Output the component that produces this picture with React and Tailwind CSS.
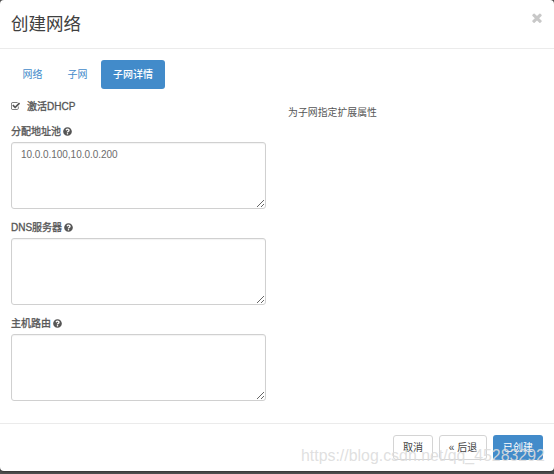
import React, { useState } from "react";
import { FaQuestionCircle } from "react-icons/fa";

const tabs = [
    { name: '网络', className: 'w-[43px]' },
    { name: '子网', className: 'w-[43px]' },
    { name: '子网详情', className: 'w-[64px]' },
]

function CloseIcon() {
    return (
        <svg viewBox="302 302 1188 1252" className="h-[10px] w-[10px]" fill="currentColor">
            <path d="M1490 1322q0 40-28 68l-136 136q-28 28-68 28t-68-28l-294-294-294 294q-28 28-68 28t-68-28l-136-136q-28-28-28-68t28-68l294-294-294-294q-28-28-28-68t28-68l136-136q28-28 68-28t68 28l294 294 294-294q28-28 68-28t68 28l136 136q28 28 28 68t-28 68l-294 294 294 294q28 28 28 68z" />
        </svg>
    )
}

function CheckIcon() {
    return (
        <svg viewBox="64 128 1664 1408" className="h-[8px] w-[9px]" fill="currentColor">
            <path d="M1472 930v318q0 119-84.5 203.5t-203.5 84.5h-832q-119 0-203.5-84.5t-84.5-203.5v-832q0-119 84.5-203.5t203.5-84.5h832q63 0 117 25 15 7 18 23 3 17-9 29l-49 49q-10 10-23 10-3 0-9-2-23-6-45-6h-832q-66 0-113 47t-47 113v832q0 66 47 113t113 47h832q66 0 113-47t47-113v-254q0-13 9-22l64-64q10-10 23-10 6 0 12 3 20 8 20 29zm231-489l-814 814q-24 24-57 24t-57-24l-430-430q-24-24-24-57t24-57l110-110q24-24 57-24t57 24l263 263 647-647q24-24 57-24t57 24l110 110q24 24 24 57t-24 57z" />
        </svg>
    )
}

function Field({ label, value }) {
    return (
        <div className="h-24">
            <label className="flex h-[18px] items-center gap-[2px] text-[#555] [-webkit-text-stroke:0.3px]">
                {label}
                <FaQuestionCircle className="h-[9px] w-[9px]" />
            </label>
            <textarea
                defaultValue={value}
                className="mt-[2px] block h-[67px] w-[255px] resize rounded-[3px] border border-[#d0d0d0] bg-white px-[9px] pt-[5px] text-[10px] leading-[14px] tracking-[-0.04px] text-[#6c6c6c] shadow-[inset_0_1px_1px_rgba(0,0,0,0.05)] outline-none"
            />
        </div>
    )
}

function App() {

    const [active, setActive] = useState('子网详情')

    return (
        <div className="h-[474px] w-[554px] overflow-hidden bg-[#505050] text-[10px] font-['Liberation_Sans','Noto_Sans_CJK_SC',sans-serif]">
            <div className="relative flex h-[471px] flex-col rounded-[4px] bg-white shadow-[0_1px_2px_#333]">
                {/* header */}
                <div className="flex h-[49px] shrink-0 items-start justify-between border-b border-[#ebebeb] pl-[11px] pr-3">
                    <h3 className="mt-2.5 text-[17.5px] leading-7 text-[#404040]">创建网络</h3>
                    <button type="button" className="mt-[13px] text-[#c8c8c8]"><CloseIcon /></button>
                </div>

                {/* tabs */}
                <div className="mt-[11px] flex h-[29px] shrink-0 gap-[2px] pl-[11px]">
                    {tabs.map((tab) => (
                        <button
                            key={tab.name}
                            type="button"
                            onClick={() => setActive(tab.name)}
                            className={`${tab.className} rounded-[3px] ${active == tab.name ? 'bg-[#428bca] font-medium text-white' : 'text-[#428bca]'}`}
                        >
                            {tab.name}
                        </button>
                    ))}
                </div>

                <div className="flex grow pl-[11px] pt-2">
                    <div className="w-[277px]">
                        <div className="mb-[7px] flex h-[18px] items-center gap-[7px] text-[#555] [-webkit-text-stroke:0.3px]">
                            <CheckIcon />
                            激活DHCP
                        </div>
                        <Field label="分配地址池" value="10.0.0.100,10.0.0.200" />
                        <Field label="DNS服务器" value="" />
                        <Field label="主机路由" value="" />
                    </div>
                    <p className="mt-2 text-[9.9px] leading-[16px] text-[#555]">为子网指定扩展属性</p>
                </div>

                {/* footer */}
                <div className="flex h-12 shrink-0 justify-end gap-[6px] border-t border-[#ebebeb] pr-[11px] pt-[11px]">
                    <button type="button" className="h-[25px] w-[40px] rounded-[3px] border border-[#d4d4d4] text-[#444]">取消</button>
                    <button type="button" className="h-[25px] w-[48px] rounded-[3px] border border-[#d4d4d4] text-[#444]">« 后退</button>
                    <button type="button" className="h-[25px] w-[50px] rounded-[3px] bg-[#428bca] text-white">已创建</button>
                </div>

                <span className="pointer-events-none absolute left-[301px] top-[446px] whitespace-nowrap text-[15.9px] leading-5 text-[#dcdcdc]/90">
                    https://blog.csdn.net/qq_45283292
                </span>
            </div>
        </div>
    )
}

export default App;
